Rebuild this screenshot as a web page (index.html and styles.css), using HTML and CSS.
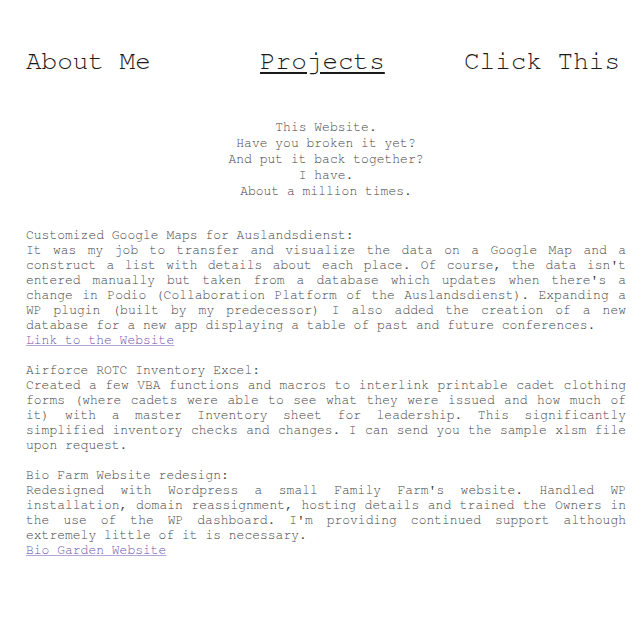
FILE: index.html
```html
<!DOCTYPE html>
<html>
<head>
<meta charset="utf-8">
<link rel="stylesheet" href="styles.css">
</head>
<body>
<div class="page">
  <nav class="nav">
    <a class="nav-item" href="#">About Me</a>
    <a class="nav-item active" href="#">Projects</a>
    <a class="nav-item" href="#">Click This</a>
  </nav>
  <p class="intro">This Website.<br>Have you broken it yet?<br>And put it back together?<br>I have.<br>About a million times.</p>
  <div class="projects">
    <p class="project">Customized Google Maps for Auslandsdienst:<br>It was my job to transfer and visualize the data on a Google Map and a construct a list with details about each place. Of course, the data isn't entered manually but taken from a database which updates when there's a change in Podio (Collaboration Platform of the Auslandsdienst). Expanding a WP plugin (built by my predecessor) I also added the creation of a new database for a new app displaying a table of past and future conferences.<br><a class="link" href="#">Link to the Website</a></p>
    <p class="project">Airforce ROTC Inventory Excel:<br>Created a few VBA functions and macros to interlink printable cadet clothing forms (where cadets were able to see what they were issued and how much of it) with a master Inventory sheet for leadership. This significantly simplified inventory checks and changes. I can send you the sample xlsm file upon request.</p>
    <p class="project">Bio Farm Website redesign:<br>Redesigned with Wordpress a small Family Farm's website. Handled WP installation, domain reassignment, hosting details and trained the Owners in the use of the WP dashboard. I'm providing continued support although extremely little of it is necessary.<br><a class="link" href="#">Bio Garden Website</a></p>
  </div>
</div>
</body>
</html>
```
FILE: styles.css
```css
html, body {
  margin: 0;
  padding: 0;
  background: #fff;
}
body {
  font-family: "Nimbus Mono PS", "Nimbus Mono L", "FreeMono", "Courier", "Liberation Mono", monospace;
  color: #444;
  font-size: 13px;
}
.page {
  width: 600px;
  margin-left: 26px;
  padding-top: 48px;
}
.nav {
  display: grid;
  grid-template-columns: 234px 204px auto;
  font-size: 26px;
}
.nav-item {
  color: #1a1a1a;
  text-decoration: none;
}
.nav-item.active {
  text-decoration: underline;
  text-underline-offset: 3px;
}
.intro {
  text-align: center;
  line-height: 16px;
  margin: 46px 0 0;
}
.projects {
  margin-top: 28px;
}
.project {
  text-align: justify;
  line-height: 15px;
  margin: 0 0 15px;
}
.link {
  color: #6b52ae;
  text-decoration-color: #b5a6d8;
}
```
